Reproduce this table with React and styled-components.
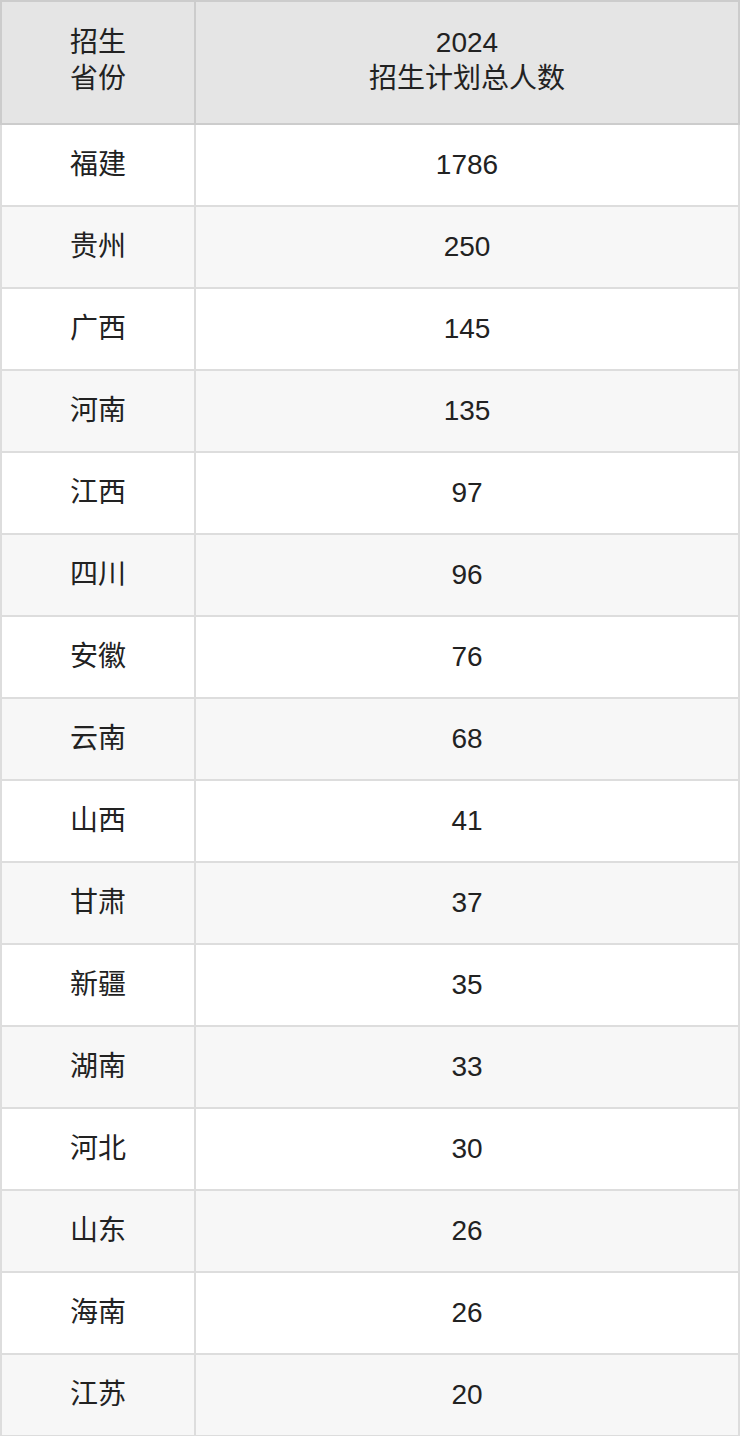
import styled, { createGlobalStyle } from "styled-components";

const GlobalStyle = createGlobalStyle`
  body {
    margin: 0;
    background: #fff;
    font-family: "Liberation Sans", Arial, "Noto Sans CJK SC", sans-serif;
  }
`;

const rows = [
  ["福建", 1786],
  ["贵州", 250],
  ["广西", 145],
  ["河南", 135],
  ["江西", 97],
  ["四川", 96],
  ["安徽", 76],
  ["云南", 68],
  ["山西", 41],
  ["甘肃", 37],
  ["新疆", 35],
  ["湖南", 33],
  ["河北", 30],
  ["山东", 26],
  ["海南", 26],
  ["江苏", 20],
];

const Table = styled.table`
  width: 740px;
  border-collapse: collapse;
  table-layout: fixed;
  color: #222;
  font-size: 28px;
  line-height: 36px;
  text-align: center;
`;

const HeadRow = styled.tr`
  height: 123px;
  background: #e5e5e5;
`;

const HeadCell = styled.th`
  font-weight: normal;
  border: 2px solid #ccc;
  padding: 0 0 4px;
  width: ${(p) => p.$width || "auto"};
`;

const Row = styled.tr`
  height: 82px;
  background: ${(p) => (p.$striped ? "#f7f7f7" : "#fff")};
`;

const Cell = styled.td`
  border: 2px solid #ddd;
  padding: 0;
`;

export default function App() {
  return (
    <>
      <GlobalStyle />
      <Table>
        <thead>
          <HeadRow>
            <HeadCell $width="192px">
              招生
              <br />
              省份
            </HeadCell>
            <HeadCell>
              2024
              <br />
              招生计划总人数
            </HeadCell>
          </HeadRow>
        </thead>
        <tbody>
          {rows.map(([name, count], i) => (
            <Row key={name + i} $striped={i % 2 === 1}>
              <Cell>{name}</Cell>
              <Cell>{count}</Cell>
            </Row>
          ))}
        </tbody>
      </Table>
    </>
  );
}
